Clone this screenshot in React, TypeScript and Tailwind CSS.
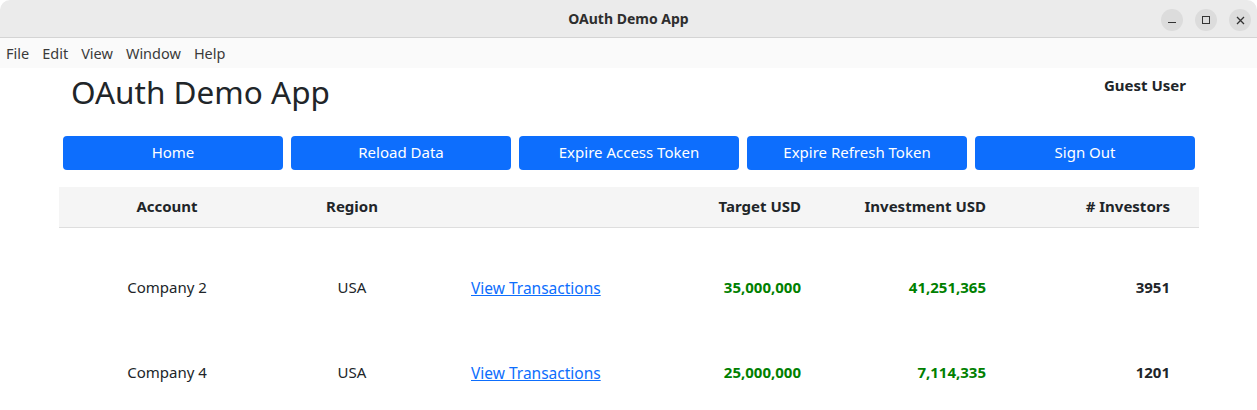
import React from "react";

const buttons = ["Home", "Reload Data", "Expire Access Token", "Expire Refresh Token", "Sign Out"];
const rows = [
  { account: "Company 2", region: "USA", target: "35,000,000", invest: "41,251,365", investors: "3951" },
  { account: "Company 4", region: "USA", target: "25,000,000", invest: "7,114,335", investors: "1201" },
];

export default function App() {
  return (
    <div className="w-[1257px] h-[410px] overflow-hidden bg-white text-[#212529]" style={{ fontFamily: '"Noto Sans", "Open Sans", sans-serif' }}>
      {/* Title bar */}
      <div className="relative h-[38px] bg-[#ebebeb] border-b border-[#d4d4d4] rounded-t-[10px] flex items-center justify-center">
        <span className="text-[14px] font-bold text-[#2e2e2e]">OAuth Demo App</span>
        <div className="absolute right-[6px] top-[9px] flex gap-[12px]">
          <div className="w-[22px] h-[22px] rounded-full bg-[#dcdcdc] flex items-center justify-center">
            <div className="w-[8px] h-[1.5px] bg-[#333] mt-[5px]" />
          </div>
          <div className="w-[22px] h-[22px] rounded-full bg-[#dcdcdc] flex items-center justify-center">
            <div className="w-[8px] h-[8px] border border-[#333]" />
          </div>
          <div className="w-[22px] h-[22px] rounded-full bg-[#dcdcdc] flex items-center justify-center">
            <svg width="9" height="9" viewBox="0 0 9 9"><path d="M1 1L8 8M8 1L1 8" stroke="#333" strokeWidth="1.3" /></svg>
          </div>
        </div>
      </div>
      {/* Menu bar */}
      <div className="h-[30px] bg-[#fafafa] flex items-center pl-[6px] pt-[2px] gap-[13px] text-[14.5px] text-[#3a3a3a]">
        <span>File</span>
        <span>Edit</span>
        <span>View</span>
        <span>Window</span>
        <span>Help</span>
      </div>
      {/* Content */}
      <div className="w-[1140px] ml-[59px]">
        <div className="flex justify-between items-start pt-[4px]">
          <h1 className="ml-[12px] text-[31.5px] leading-[40px] text-[#212529]">OAuth Demo App</h1>
          <div className="mr-[13px] mt-[2px] text-[15px] font-bold">Guest User</div>
        </div>
        <div className="flex gap-[8px] px-[4px] mt-[24px]">
          {buttons.map((b) => (
            <button key={b} className="w-[220px] h-[34px] rounded-[4px] bg-[#0d6efd] text-white text-[15px] pb-[1px]">
              {b}
            </button>
          ))}
        </div>
        <div className="mt-[17px]">
          <div className="grid grid-cols-[216px_154px_215px_185px_185px_185px] h-[41px] items-center bg-[#f5f5f5] border-b border-[#dedede] font-bold text-[15px] pb-[2px]">
            <div className="text-center">Account</div>
            <div className="text-center">Region</div>
            <div></div>
            <div className="text-right pr-[28px]">Target USD</div>
            <div className="text-right pr-[28px]">Investment USD</div>
            <div className="text-right pr-[29px]">
              # Investors
            </div>
          </div>
          {rows.map((r) => (
            <div key={r.account} className="grid grid-cols-[216px_154px_215px_185px_185px_185px] h-[85px] items-center pt-[33px] text-[15px] leading-[22px]">
              <div className="text-center">{r.account}</div>
              <div className="text-center">{r.region}</div>
              <div className="pl-[42px] pt-[2px]">
                <a href="#" className="text-[#0d6efd] underline text-[15.5px]">View Transactions</a>
              </div>
              <div className="text-right pr-[28px] font-bold text-[#008000]">{r.target}</div>
              <div className="text-right pr-[28px] font-bold text-[#008000]">{r.invest}</div>
              <div className="text-right pr-[29px] font-bold">{r.investors}</div>
            </div>
          ))}
        </div>
      </div>
    </div>
  );
}
